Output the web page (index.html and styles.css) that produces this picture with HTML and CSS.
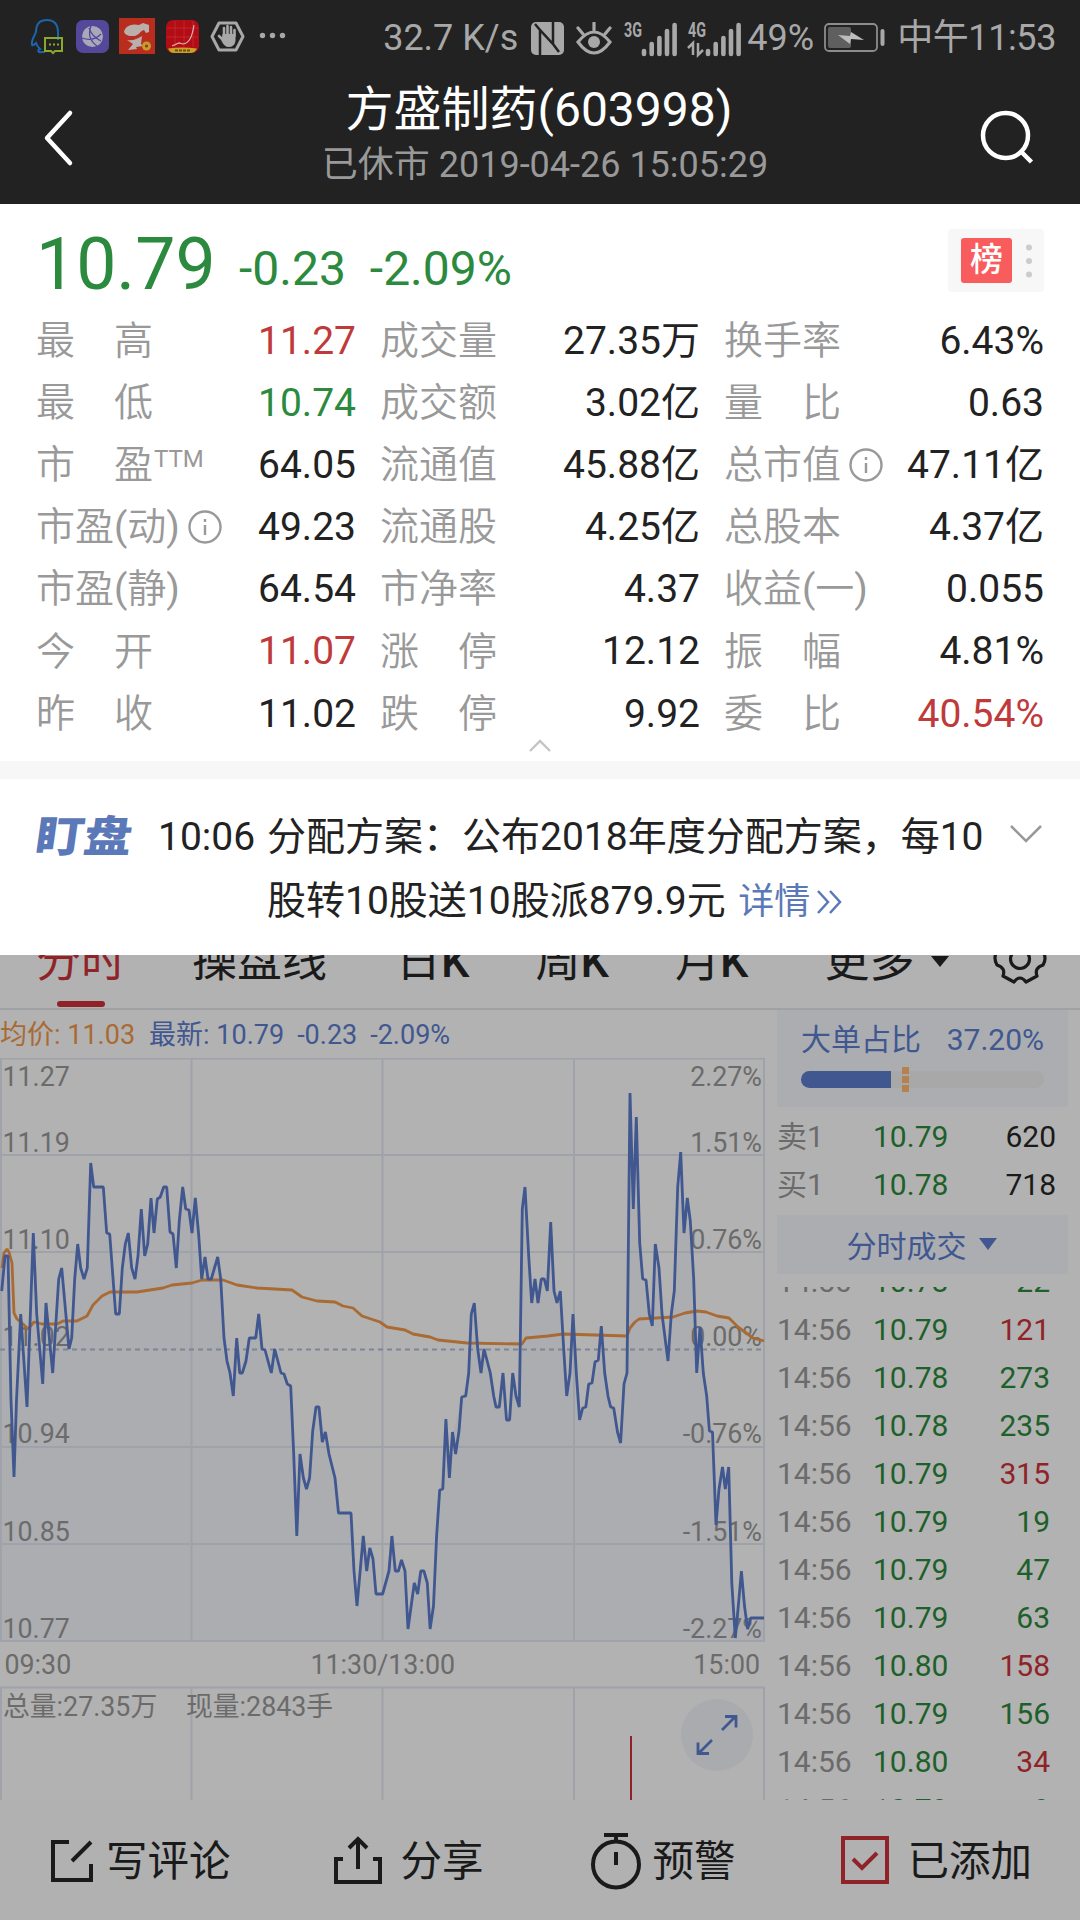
FILE: index.html
```html
<!DOCTYPE html>
<html lang="zh-Hans">
<head>
  <meta charset="UTF-8">
  <title>方盛制药(603998)</title>
  <link rel="stylesheet" href="styles.css">
</head>
<body>

  <header class="header">
    <div class="status">
      <div class="status-apps">
        <svg width="45" height="45" viewBox="0 0 45 45" fill="none">
          <path d="M33 25v-7c0-9-4-13-11-13S11 9 11 17c-1 3-5 8-4 13 1 1 3-1 4-2 1 3 2 4 4 6-3 1-2 4 2 3h3" stroke="#1a66ad" stroke-width="2"/>
          <path d="M20 23h17v13h-7l-2 2-2-2h-6z" stroke="#8aa82a" stroke-width="2"/>
          <path d="M24 29.500h2m2 0h2m2 0h2" stroke="#8aa82a" stroke-width="2"/>
        </svg>
        <svg width="45" height="45" viewBox="0 0 45 45">
          <rect x="6" y="5" width="33" height="33" rx="7" fill="#54489a"/>
          <circle cx="22.500" cy="21.500" r="10.500" fill="#aaa8b8"/>
          <path d="M21 11c-3 8-1 15 6 20M12 23c8 3 14 1 19-4M19 13c2 6 6 10 12 13" fill="none" stroke="#54489a" stroke-width="1.300"/>
        </svg>
        <svg width="45" height="45" viewBox="0 0 45 45">
          <rect x="4" y="3" width="36" height="36" fill="#b92d1e"/>
          <path d="M9 17c1-6 8-9 15-7l4-2 3 1 3 1v7l-3 1-2-3c-4 1-6 7-12 6-5 0-7-2-8-4z" fill="#b9b0ae"/>
          <path d="M12 25c6 1 10-1 15-4l-1 8 2 2-7 1 1 2-9 1 5-6z" fill="#b9b0ae"/>
          <circle cx="31.500" cy="31" r="4.500" fill="#c79a2c"/><circle cx="31.500" cy="31" r="1.500" fill="#8a3a10"/>
        </svg>
        <svg width="45" height="45" viewBox="0 0 45 45">
          <rect x="6" y="5" width="33" height="33" rx="7" fill="#b30c14"/>
          <path d="M15 6v26M24 6v26M33 6v26M7 13h31M7 22h31" stroke="#c4353b" stroke-width=".700"/>
          <path d="M8 33.500q14-2 29 0-2 4.500-7 4.500H14q-4 0-6-4.500z" fill="#c9a227"/>
          <path d="M12 31l7-3 4 1c6-1 9-6 11-19" fill="none" stroke="#d8b4b4" stroke-width="1.200"/>
          <path d="M15 35.500h3m1 0h3m1 0h3m1 0h3" stroke="#7a4a10" stroke-width="2"/>
        </svg>
        <svg width="45" height="45" viewBox="0 0 45 45">
          <path d="M14 8h17l7 13.500-7 13.500H14L7 21.500z" fill="none" stroke="#a8a8a8" stroke-width="3" stroke-linejoin="round"/>
          <path d="M19 21v-8m3.500 7v-9m3.500 9v-8m3.500 9v-6M14 21l5 5" stroke="#a8a8a8" stroke-width="2.600" stroke-linecap="round"/>
          <path d="M17.500 19h13v7q-1 6-7 6-4 0-7-6z" fill="#a8a8a8"/>
        </svg>
        <svg width="45" height="45" viewBox="0 0 45 45" fill="#a8a8a8">
          <circle cx="12.500" cy="20.500" r="2.700"/><circle cx="22.500" cy="20.500" r="2.700"/><circle cx="32.500" cy="20.500" r="2.700"/>
        </svg>
      </div>
      <div class="status-info">
        <span class="status-speed">32.7 K/s</span>
        <svg class="status-nfc" width="33" height="33" viewBox="0 0 33 33">
          <rect width="33" height="33" rx="5" fill="#a8a8a8"/>
          <path d="M9 33V8l13 14V11M9 8L4 2M22 22l6 8M22 0v12" fill="none" stroke="#222" stroke-width="2.500"/>
        </svg>
        <svg class="status-eye" width="36" height="33" viewBox="0 0 36 33" fill="none" stroke="#a8a8a8" stroke-width="3.200">
          <path d="M2 20q16-20 32 0-16 22-32 0z"/><path d="M18 8V1M7 12L2 6M29 12l5-6" stroke-linecap="round"/>
          <circle cx="18" cy="20" r="6" fill="#a8a8a8" stroke="none"/>
        </svg>
        <svg class="status-signal" width="54" height="36" viewBox="0 0 54 36">
          <text class="net" x="0" y="17" textLength="18" lengthAdjust="spacingAndGlyphs">3G</text>
          <path d="M20 34v-3M27.700 34V24M35.400 34V18M43 34V11M50.600 34V5" stroke="#a8a8a8" stroke-width="4.600" stroke-linecap="round"/>
        </svg>
        <svg class="status-signal" width="54" height="36" viewBox="0 0 54 36">
          <text class="net" x="0" y="17" textLength="18" lengthAdjust="spacingAndGlyphs">4G</text>
          <path d="M20 34v-3M27.700 34V24M35.400 34V18M43 34V11M50.600 34V5" stroke="#a8a8a8" stroke-width="4.600" stroke-linecap="round"/>
          <path d="M0 28l5-5v12M15 30l-5 5V23" fill="none" stroke="#a8a8a8" stroke-width="2.500"/>
        </svg>
        <span class="status-percent">49%</span>
        <svg class="status-battery" width="61" height="30" viewBox="0 0 61 30">
          <rect x="1" y="1" width="52" height="27" rx="4" fill="none" stroke="#8c8c8c" stroke-width="1.800"/>
          <rect x="4" y="4" width="23" height="21" rx="2" fill="#5f5f5f"/>
          <path d="M14 12l12 1 1-4 13 8-13-1-1 5z" fill="#bcbcbc"/>
          <path d="M58.500 8v13" stroke="#a8a8a8" stroke-width="4" stroke-linecap="round"/>
        </svg>
        <span class="status-time">中午11:53</span>
      </div>
    </div>
    <div class="navbar">
      <svg class="nav-back" width="40" height="60" viewBox="0 0 40 60" fill="none" stroke="#fff" stroke-width="4.500" stroke-linecap="round" stroke-linejoin="round">
        <path d="M32 5L9 30l23 25"/>
      </svg>
      <div class="nav-title">
        <h1>方盛制药(603998)</h1>
        <p>已休市 2019-04-26 15:05:29</p>
      </div>
      <svg class="nav-search" width="56" height="60" viewBox="0 0 56 60" fill="none" stroke="#fff" stroke-width="4.500">
        <circle cx="26.500" cy="27.500" r="22.500"/><path d="M42.500 44l10 10"/>
      </svg>
    </div>
  </header>

  <section class="quote">
    <div class="quote-top">
      <span class="price">10.79</span>
      <span class="change">-0.23</span>
      <span class="change">-2.09%</span>
      <div class="rank"><b>榜</b><i></i></div>
    </div>
    <div class="quote-grid">
      <div><label>最　高</label><span class="up">11.27</span></div>
      <div><label>成交量</label><span>27.35万</span></div>
      <div><label>换手率</label><span>6.43%</span></div>
      <div><label>最　低</label><span class="down">10.74</span></div>
      <div><label>成交额</label><span>3.02亿</span></div>
      <div><label>量　比</label><span>0.63</span></div>
      <div><label>市　盈<small>TTM</small></label><span>64.05</span></div>
      <div><label>流通值</label><span>45.88亿</span></div>
      <div><label>总市值<svg class="info" viewBox="0 0 34 34"><circle cx="17" cy="17" r="15.500"/><path d="M17 15v10M17 9v3"/></svg></label><span>47.11亿</span></div>
      <div><label>市盈(动)<svg class="info" viewBox="0 0 34 34"><circle cx="17" cy="17" r="15.500"/><path d="M17 15v10M17 9v3"/></svg></label><span>49.23</span></div>
      <div><label>流通股</label><span>4.25亿</span></div>
      <div><label>总股本</label><span>4.37亿</span></div>
      <div><label>市盈(静)</label><span>64.54</span></div>
      <div><label>市净率</label><span>4.37</span></div>
      <div><label>收益(一)</label><span>0.055</span></div>
      <div><label>今　开</label><span class="up">11.07</span></div>
      <div><label>涨　停</label><span>12.12</span></div>
      <div><label>振　幅</label><span>4.81%</span></div>
      <div><label>昨　收</label><span>11.02</span></div>
      <div><label>跌　停</label><span>9.92</span></div>
      <div><label>委　比</label><span class="up">40.54%</span></div>
    </div>
    <svg class="collapse" width="24" height="14" viewBox="0 0 24 14"><path d="M2 12L12 2l10 10" fill="none" stroke="#c4c4c4" stroke-width="2.400"/></svg>
  </section>

  <section class="notice">
    <strong>盯盘</strong>
    <time>10:06</time>
    <p>分配方案：公布2018年度分配方案，每10股转10股送10股派879.9元 <a>详情<svg width="28" height="26" viewBox="0 0 28 26"><path d="M2 2l10 11L2 24M14 2l10 11-10 11" fill="none" stroke="#5b78b8" stroke-width="2.500"/></svg></a></p>
    <svg class="expand" width="34" height="20" viewBox="0 0 34 20"><path d="M2 2l15 15L32 2" fill="none" stroke="#999" stroke-width="2.500"/></svg>
  </section>

  <nav class="tabs">
    <span class="tab active">分时</span>
    <span class="tab">操盘线</span>
    <span class="tab">日<b>K</b></span>
    <span class="tab">周<b>K</b></span>
    <span class="tab">月<b>K</b></span>
    <span class="tab more">更多</span>
    <svg class="gear" width="56" height="94" viewBox="992 913 56 94" fill="none" stroke="#1a1a1a" stroke-width="3.200" stroke-linejoin="round">
      <circle cx="1020" cy="958" r="9.500"/>
      <path d="M1014 933q6 8 12 0l11 6q-3 8 6 11q4 8 0 14-9 3-6 11l-11 6q-6-8-12 0l-11-6q3-8-6-11-4-7 0-14 9-3 6-11z"/>
    </svg>
  </nav>

  <main class="board">
    <div class="chart">
      <div class="legend"><span class="avg">均价: 11.03</span><span>最新: 10.79</span><span>-0.23</span><span>-2.09%</span></div>
      <svg width="768" height="742" viewBox="0 1058 768 742">
        <!-- area under the price line -->
        <polygon class="area" points="2,1641 2,1291 5,1256 8,1256 11,1400 14,1477 17,1400 21,1314 27,1407 33,1233 37,1314 43,1384 46,1303 53,1373 59,1279 62,1268 69,1349 75,1279 78,1244 84,1279 87,1268 91,1163 94,1187 103,1187 107,1233 110,1233 116,1314 119,1314 122,1268 128,1233 135,1279 141,1209 145,1256 151,1198 154,1233 157,1199 165,1187 170,1232 176,1268 183,1187 189,1210 192,1233 195,1198 202,1279 218,1257 221,1279 224,1338 233,1396 237,1338 240,1373 249,1338 256,1338 259,1314 262,1349 271,1373 275,1349 281,1373 291,1386 297,1536 300,1454 306,1489 316,1407 319,1407 335,1478 338,1513 351,1513 357,1606 363,1536 367,1571 370,1548 376,1594 383,1594 392,1536 395,1571 405,1571 408,1629 414,1583 421,1571 427,1583 430,1629 437,1536 440,1490 446,1419 449,1478 453,1432 462,1397 469,1373 474,1303 481,1373 484,1349 494,1396 499,1407 503,1373 508,1420 513,1373 519,1407 522,1209 525,1187 532,1303 544,1279 547,1291 551,1222 557,1303 560,1291 567,1396 573,1314 580,1420 598,1360 601,1326 608,1396 614,1408 621,1443 624,1384 627,1373 630,1093 633,1209 636,1117 643,1279 652,1326 655,1244 668,1361 674,1291 681,1152 684,1233 687,1198 694,1279 697,1373 700,1327 707,1396 712,1432 716,1525 722,1467 725,1489 729,1467 735,1638 741,1571 748,1629 764,1618 764,1641"/>
        <path class="grid" d="M0 1058.500H765M2 1155H764M2 1252H764M2 1447H764M2 1544H764M0 1641H765M1 1058V1641M191.500 1058V1641M382.500 1058V1641M574 1058V1641M764 1058V1641M0 1687.500H765M1 1687V1800M191.500 1687V1800M382.500 1687V1800M574 1687V1800M764 1687V1800"/>
        <path class="zero" d="M0 1349.500H764"/>
        <g class="axis">
          <text x="2.500" y="1086">11.27</text><text x="2.500" y="1152">11.19</text><text x="2.500" y="1249">11.10</text><text x="2.500" y="1346">11.02</text><text x="2.500" y="1442.500">10.94</text><text x="2.500" y="1541">10.85</text><text x="2.500" y="1637.500">10.77</text>
          <text x="4.500" y="1673.500">09:30</text><text x="310.500" y="1673.500">11:30/13:00</text><text x="3" y="1716">总量:27.35万</text><text x="186" y="1716">现量:2843手</text>
        </g>
        <g class="axis end">
          <text x="762" y="1086">2.27%</text><text x="762" y="1152">1.51%</text><text x="762" y="1249">0.76%</text><text x="762" y="1346">0.00%</text><text x="762" y="1442.500">-0.76%</text><text x="762" y="1541">-1.51%</text><text x="762" y="1637.500">-2.27%</text>
          <text x="760" y="1673.500">15:00</text>
        </g>
        <polyline class="line-avg" points="2,1268 4,1253 7,1249 9,1252 12,1263 14,1313 17,1319 23,1324 28,1329 34,1322 42,1324 57,1324 63,1321 77,1321 87,1316 93,1305 102,1296 110,1292 137,1292 163,1288 172,1285 192,1283 202,1280 223,1280 237,1285 257,1288 292,1290 302,1297 317,1301 335,1302 343,1306 353,1308 362,1316 380,1322 387,1327 405,1330 413,1334 430,1337 438,1340 467,1343 522,1344 526,1338 548,1336 563,1334 627,1336 630,1328 635,1322 639,1319 673,1317 685,1313 697,1311 706,1312 717,1316 729,1318 738,1327 753,1338 764,1341"/>
        <polyline class="line-price" points="1.700,1291 5,1256 8,1256 11,1400 14,1477 16.500,1400 20.700,1314 27,1407 33.300,1233 36.700,1314 42.700,1384 46,1303 52.700,1373 58.700,1279 61.700,1268 69,1349 71.700,1338 74.700,1279 77.700,1244 80.700,1268 84,1279 87.300,1268 90.700,1163 93.700,1187 103.300,1187 106.700,1233 109.700,1234 115.700,1314 119.300,1314 122.300,1268 125.300,1244 128.300,1233 131.700,1268 135,1279 138,1256 141.300,1209 144.700,1256 147.700,1244 151,1198 154,1233 157.300,1199 160.300,1197 163.700,1187 166.700,1187 170,1232 173,1234 176.300,1268 179.300,1221 182.700,1187 185.700,1209 189,1210 192,1233 195.300,1198 198.700,1235 201.700,1279 205,1257 208,1279 211.300,1279 217.700,1257 220.700,1279 224,1338 227,1361 230,1373 233.300,1396 236.700,1338 239.700,1373 242.300,1373 246,1361 249.300,1338 255.700,1338 258.700,1314 262,1349 265,1350 271.300,1373 274.700,1349 281,1373 284,1374 287.300,1384 290.700,1386 293.700,1454 296.800,1536 300,1454 303.400,1478 306.500,1489 309.600,1478 312.700,1431 316,1407 319,1407 322.300,1442 325.400,1432 329,1454 335,1478 338.500,1513 351,1513 354,1571 357,1606 363.300,1536 366.700,1571 369.800,1548 373,1559 376,1594 382.600,1594 389,1571 391.900,1536 395.300,1571 398.400,1571 401.500,1560 405,1571 408,1629 414.300,1583 417.700,1594 420.800,1571 423.900,1571 427.300,1583 430.100,1629 433.500,1606 436.600,1536 439.700,1490 442.800,1489 445.900,1419 449.400,1478 452.500,1432 455.600,1454 459,1431 461.700,1397 465.700,1396 468.700,1373 471.300,1314 474.300,1303 477.700,1349 481,1373 484,1349 490.300,1373 493.700,1396 496,1407 499.300,1407 503,1373 506.500,1420 509.600,1420 512.700,1373 516,1396 519.300,1407 522.300,1209 525,1187 528.700,1256 531.700,1303 535,1279 538,1303 541.300,1279 544.300,1279 547.300,1291 550.700,1222 554,1291 557,1303 560.300,1291 563.700,1349 566.700,1396 570,1373 573,1314 576.300,1373 579.600,1420 582.700,1408 585.800,1407 588.700,1384 592,1383 595,1362 598.300,1360 601.300,1326 604.700,1373 608,1396 610.600,1407 613.700,1408 617.500,1432 620.600,1443 624,1384 627,1373 630,1093 633.300,1209 636.300,1117 639.700,1243 642.700,1279 646,1280 649.300,1314 652.300,1326 655.300,1244 659,1268 662,1314 668,1361 671.300,1314 674.300,1291 677.700,1187 680.700,1152 684,1233 687.300,1198 690.300,1221 693.700,1279 696.700,1373 700,1327 703.300,1373 706.700,1396 709.400,1431 712.500,1432 716,1525 719,1489 722.500,1467 725.300,1489 728.700,1467 731.800,1583 735.300,1638 738.300,1606 741.400,1571 744.500,1606 747.600,1629 750.700,1618 764,1618"/>
        <path d="M631 1736V1800" stroke="#8f2328" stroke-width="2"/>
        <circle cx="717" cy="1735" r="36" fill="#a9abaf"/>
        <path d="M722 1730l14-14M725 1716.500h11v11M712 1740l-14 14M709 1753.500h-11v-11" fill="none" stroke="#405790" stroke-width="2.800"/>
      </svg>
    </div>

    <aside class="side">
      <div class="big-order">
        <div><span>大单占比</span><span>37.20%</span></div>
        <div class="bar"><div class="bar-fill" style="width:37.2%"></div><div class="bar-mark"><i></i><i></i><i></i></div></div>
      </div>
      <div class="row book"><span>卖1</span><span>10.79</span><span>620</span></div>
      <div class="row book"><span>买1</span><span>10.78</span><span>718</span></div>
      <div class="trades-title">分时成交<i></i></div>
      <div class="trades">
        <div class="row"><span>14:56</span><span>10.78</span><span class="down">22</span></div>
        <div class="row"><span>14:56</span><span>10.79</span><span class="up">121</span></div>
        <div class="row"><span>14:56</span><span>10.78</span><span class="down">273</span></div>
        <div class="row"><span>14:56</span><span>10.78</span><span class="down">235</span></div>
        <div class="row"><span>14:56</span><span>10.79</span><span class="up">315</span></div>
        <div class="row"><span>14:56</span><span>10.79</span><span class="down">19</span></div>
        <div class="row"><span>14:56</span><span>10.79</span><span class="down">47</span></div>
        <div class="row"><span>14:56</span><span>10.79</span><span class="down">63</span></div>
        <div class="row"><span>14:56</span><span>10.80</span><span class="up">158</span></div>
        <div class="row"><span>14:56</span><span>10.79</span><span class="down">156</span></div>
        <div class="row"><span>14:56</span><span>10.80</span><span class="up">34</span></div>
        <div class="row"><span>14:56</span><span>10.79</span><span class="down">9</span></div>
      </div>
    </aside>
  </main>

  <footer class="toolbar">
    <a class="tool-comment"><svg width="44" height="60" viewBox="0 0 44 60" fill="none" stroke="#1a1a1a" stroke-width="4"><path d="M19 12H3v38h38V34M22 31l19-19"/></svg><span>写评论</span></a>
    <a class="tool-share"><svg width="48" height="60" viewBox="0 0 48 60" fill="none" stroke="#1a1a1a" stroke-width="4"><path d="M9 29H2v23h44V29h-7M24 39V10M15 18l9-9 9 9"/></svg><span>分享</span></a>
    <a class="tool-alert"><svg width="50" height="60" viewBox="0 0 50 60" fill="none" stroke="#1a1a1a" stroke-width="4"><circle cx="25" cy="34.500" r="23"/><path d="M25 22v13M25 6v6M13 5h24"/></svg><span>预警</span></a>
    <a class="tool-added"><svg width="48" height="60" viewBox="0 0 48 60" fill="none" stroke="#8f2328" stroke-width="4"><path d="M2 8h44v44H2zM12 29l9 9 15-15"/></svg><span>已添加</span></a>
  </footer>

</body>
</html>
```
FILE: styles.css
```css
* { box-sizing: border-box; }
body {
  margin: 0; width: 1080px; height: 1920px; overflow: hidden;
  font-family: Roboto, "Noto Sans CJK SC", sans-serif;
  background: #b2b2b2; color: #222;
}
h1, p { margin: 0; font-weight: 400; }
i { font-style: normal; }
svg { display: block; flex: none; }
.up { color: #bf3a3a; }
.down { color: #2b8a3e; }

/* header */
.header { height: 204px; background: #222; }
.status {
  height: 75px; display: flex; justify-content: space-between; align-items: center;
  padding: 1px 24px 0 25px; font-size: 36px; line-height: 75px; color: #a8a8a8;
}
.status-apps, .status-info { display: flex; align-items: center; }
.status-apps svg { margin-top: -1px; }
.status-info { white-space: nowrap; }
.status-speed { margin-right: 13px; }
.status-nfc { margin-right: 12px; }
.status-eye { margin-right: 12px; }
.status-signal { margin-right: 10px; overflow: visible; }
.status-signal + .status-percent { margin-left: -5px; }
.status-percent { margin-right: 10px; }
.status-battery { margin-right: 12px; }
.status-time { letter-spacing: -0.4px; }
.net { font-size: 20px; font-weight: 700; fill: #a8a8a8; }
.navbar { display: flex; justify-content: space-between; padding: 0 45px 0 38px; }
.nav-back { margin-top: 33px; }
.nav-title { text-align: center; padding-top: 5px; margin-left: 33px; }
.nav-title h1 { font-size: 48px; line-height: 60px; margin-left: -12px; color: #fff; }
.nav-title p { font-size: 36px; line-height: 50px; color: #999; }
.nav-search { margin-top: 33px; }

/* quote panel */
.quote { height: 575px; padding: 21px 36px 0; background: #fff; border-bottom: 18px solid #f7f7f7; }
.quote-top { display: flex; height: 85px; color: #2b8a3e; }
.price { font-size: 71.5px; line-height: 80px; width: 203px; }
.change { font-size: 48px; line-height: 88px; margin-right: 24px; }
.rank {
  display: flex; align-items: center; margin: 4px 0 0 auto; width: 96px; height: 63px;
  padding-left: 13px; background: #f7f7f7; border-radius: 4px;
}
.rank b {
  width: 51px; height: 45px; border-radius: 3px; background: #f95c5c; color: #fff;
  font-size: 33px; line-height: 43px; font-weight: 500; text-align: center;
}
.rank i { width: 6px; height: 6px; margin-left: 14px; border-radius: 50%; background: #ccc; box-shadow: 0 -13.5px #ccc, 0 13.5px #ccc; }
.quote-grid { display: grid; grid-template-columns: repeat(3, 320px); column-gap: 24px; grid-auto-rows: 62.1px; font-size: 39px; line-height: 62px; }
.quote-grid div { display: flex; justify-content: space-between; white-space: nowrap; }
.quote-grid label { display: flex; align-items: center; color: #999; font-family: Roboto, "Noto Sans CJK SC DemiLight", "Noto Sans CJK SC", sans-serif; }
.quote-grid small { font-size: 24px; line-height: 30px; margin: -12px 0 0 1px; }
.info { width: 34px; height: 34px; margin-left: 8px; fill: none; stroke: #999; stroke-width: 2.4; }
.collapse { margin: -6px auto 0; }

/* notice */
.notice { display: flex; height: 176px; padding: 26px 36px 0; background: #fff; font-size: 39px; line-height: 64px; }
.notice strong { width: 122px; font-size: 48px; font-weight: 900; line-height: 56px; color: #5b78b8; transform: translateX(-6px) skewX(-8deg) scaleY(.9); }
.notice time { width: 109px; }
.notice p { width: 722px; }
.notice a { font-size: 36px; color: #5b78b8; margin-left: 3px; }
.notice a svg { display: inline-block; margin-left: 6px; vertical-align: -1px; }
.expand { margin: 19px 0 0 20px; }

/* tabs, scrolled halfway under the panel */
.tabs { display: flex; align-items: flex-end; height: 55px; overflow: hidden; border-bottom: 2px solid #a0a1a4; padding-left: 36px; font-size: 45px; line-height: 95px; color: #1a1a1a; }
.tab { height: 94px; flex: none; margin-right: 66px; }
.tab b { font-weight: 500; }
.tab:nth-child(2) { margin-right: 69px; }
.tab:nth-child(5) { margin-right: 76px; }
.tab.active { color: #8f2328; position: relative; }
.tab.active::after { content: ""; position: absolute; left: 21px; bottom: 1px; width: 48px; height: 6px; border-radius: 3px; background: #8f2328; }
.tab.more { display: flex; align-items: center; margin: 0; }
.more::after { content: ""; margin-left: 17px; border: 9px solid transparent; border-top: 11px solid #1a1a1a; border-bottom: 0; }
.gear { margin-left: 43px; }

/* chart */
.board { display: flex; height: 790px; }
.chart { width: 777px; }
.legend { display: flex; gap: 13px; height: 48px; line-height: 51px; font-size: 27px; color: #405790; }
.legend .avg { color: #a96a33; margin-right: 1px; }
.area { fill: #abadb0; }
.grid { fill: none; stroke: #9fa2a9; stroke-width: 2; }
.zero { stroke: #7d8696; stroke-width: 2; stroke-dasharray: 5 4; }
.axis { font-size: 26.8px; fill: #6b6b6b; }
.end { text-anchor: end; }
.line-avg, .line-price { fill: none; stroke-width: 2.8; stroke-linejoin: bevel; }
.line-avg { stroke: #a96a33; }
.line-price { stroke: #405790; }

/* order book */
.side { width: 291px; font-size: 30px; }
.big-order { height: 97px; padding: 11px 24px 0; background: #abadb0; color: #405790; line-height: 37px; margin-bottom: 6px; }
.big-order > div:first-child { display: flex; justify-content: space-between; height: 50px; }
.bar { display: flex; align-items: center; height: 17px; border-radius: 9px; background: #a8a8a8; }
.bar-fill { height: 17px; border-radius: 9px 0 0 9px; background: #405790; }
.bar-mark { display: grid; gap: 2px; margin-left: 11px; }
.bar-mark i { width: 7px; height: 7px; background: #b5824f; }
.row { display: flex; height: 48px; line-height: 48px; color: #1a1a1a; padding-right: 18px; }
.row span:nth-child(1) { width: 96px; color: #6b6b6b; }
.row span:nth-child(2) { width: 90px; color: #1e6029; }
.row span:nth-child(3) { margin-left: auto; }
.book { padding-right: 12px; }
.side .up { color: #8f2328; }
.side .down { color: #1e6029; }
.trades-title { display: flex; justify-content: center; align-items: center; height: 59px; margin-top: 6px; padding: 0 2px 2px 0; background: #abadb0; color: #405790; }
.trades-title i { margin-left: 12px; border: 9px solid transparent; border-top: 12px solid #405790; border-bottom: 0; }
.trades { display: flex; flex-direction: column; margin-top: 13px; height: 513px; overflow: hidden; }
.trades .row { flex: none; }
.trades .row:first-child { margin-top: -29px; }

/* toolbar */
.toolbar { display: flex; height: 120px; align-items: center; font-size: 41.5px; color: #1a1a1a; background: #b1b1b1; white-space: nowrap; }
.toolbar a { display: flex; align-items: center; }
.toolbar span { padding-bottom: 5px; }
.tool-comment { margin-left: 50px; gap: 12px; }
.tool-share { margin-left: 103px; gap: 19px; }
.tool-alert { margin-left: 107px; gap: 12px; }
.tool-added { margin-left: 105px; gap: 19px; }
```
